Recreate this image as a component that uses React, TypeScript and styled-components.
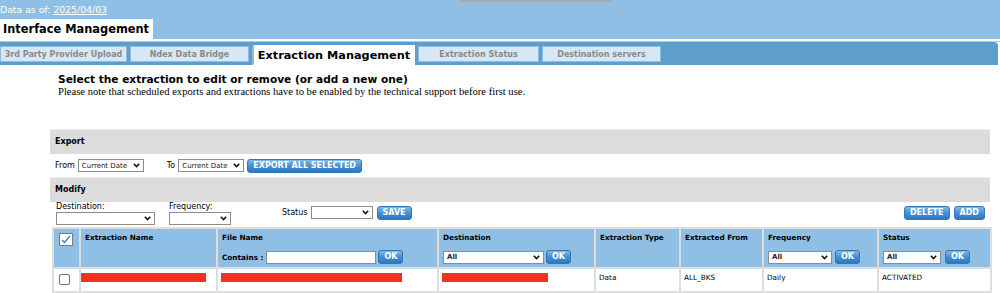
import styled, { createGlobalStyle } from "styled-components";

const GlobalStyle = createGlobalStyle`
  html, body {
    margin: 0;
    padding: 0;
    background: #fff;
  }
  body {
    font-family: "DejaVu Sans", Verdana, sans-serif;
    color: #000;
  }
`;

const Page = styled.div`
  width: 1000px;
  height: 293px;
  overflow: hidden;
`;

const TopBand = styled.header`
  position: relative;
  height: 39px;
  background: #8fbfe4;
  display: flex;
  flex-direction: column;
`;

const CutOffBar = styled.div`
  position: absolute;
  left: 459px;
  top: 0;
  width: 152px;
  height: 2px;
  background: #a8a8a8;
`;

const DataLine = styled.div`
  height: 19px;
  line-height: 19px;
  font-size: 9.3px;
  color: #fff;
  a {
    color: #fff;
    text-decoration: underline;
  }
`;

const TitleTab = styled.div`
  box-sizing: border-box;
  width: 153px;
  height: 20px;
  padding-left: 3px;
  background: #fff;
  font-size: 11.4px;
  font-weight: bold;
  line-height: 20px;
`;

const Divider = styled.div`
  height: 2px;
  background: #fff;
  border-bottom: 1px solid #a9cbe8;
`;

const TabBar = styled.nav`
  height: 23px;
  background: #5f9dcb;
  display: flex;
  align-items: flex-start;
  gap: 3px;
  padding-top: 4px;
  box-sizing: border-box;
  border-top-right-radius: 4px;
  margin-right: 2px;
`;

const Tab = styled.div<{ $w: number; $active?: boolean }>`
  box-sizing: border-box;
  width: ${(p) => p.$w}px;
  height: ${(p) => (p.$active ? 20 : 16)}px;
  margin-top: ${(p) => (p.$active ? -1 : 0)}px;
  display: flex;
  align-items: center;
  justify-content: center;
  background: ${(p) => (p.$active ? "#fff" : "#d6e7f5")};
  border: 1px solid ${(p) => (p.$active ? "#fff" : "#8dbde3")};
  border-left: ${(p) => (p.$active ? "2px solid #8dbde3" : "1px solid #8dbde3")};
  border-radius: ${(p) => (p.$active ? "3px 0 0 0" : "0")};
  color: ${(p) => (p.$active ? "#000" : "#8a8a8a")};
  font-size: ${(p) => (p.$active ? 11.3 : 8)}px;
  font-weight: bold;
  white-space: nowrap;
`;

const Content = styled.main`
  padding: 0 10px 0 50px;
`;

const Intro = styled.section`
  padding: 8px 0 0 8px;
`;

const Heading = styled.h1`
  margin: 0;
  font-size: 10.6px;
  line-height: 13px;
  font-weight: bold;
`;

const Note = styled.p`
  margin: 0;
  font-family: "Liberation Serif", "Times New Roman", serif;
  font-size: 10.6px;
  line-height: 12px;
`;

const SectionBar = styled.div<{ $h: number }>`
  height: ${(p) => p.$h}px;
  line-height: ${(p) => p.$h}px;
  background: #dcdcdc;
  border-top: 1px solid #ececec;
  padding-left: 5px;
  font-size: 8px;
  font-weight: bold;
`;

const FirstBar = styled(SectionBar)`
  margin-top: 31px;
`;

const ExportRow = styled.div`
  height: 23px;
  display: flex;
  align-items: center;
  padding-left: 5px;
  font-size: 8px;
`;

const Label = styled.span<{ $ml?: number }>`
  margin-left: ${(p) => p.$ml ?? 0}px;
  margin-right: 3px;
  font-size: 8px;
  white-space: nowrap;
`;

const SelectBox = styled.span<{ $w: number; $h?: number }>`
  box-sizing: border-box;
  display: inline-flex;
  align-items: center;
  justify-content: space-between;
  flex: none;
  width: ${(p) => p.$w}px;
  height: ${(p) => p.$h ?? 13}px;
  padding: 0 3px 0 3px;
  border: 1px solid #8c8c8c;
  background: #fff;
  font-size: 7px;
  color: #222;
  white-space: nowrap;
  svg {
    flex: none;
  }
`;

const BlueButton = styled.button<{ $ml?: number }>`
  flex: none;
  height: 14px;
  margin: 0 0 0 ${(p) => p.$ml ?? 3}px;
  padding: 0 5px;
  border: 1px solid #3577b6;
  border-radius: 3px;
  background: linear-gradient(#7fbbe8, #4490d3 50%, #2c78c0);
  color: #fff;
  font-family: "DejaVu Sans", Verdana, sans-serif;
  font-size: 8px;
  font-weight: bold;
  line-height: 12px;
  white-space: nowrap;
`;

const FilterRow = styled.div`
  height: 25px;
  display: flex;
  align-items: center;
  padding: 0 5px 0 6px;
`;

const FieldStack = styled.div<{ $mr: number }>`
  display: flex;
  flex-direction: column;
  align-self: flex-end;
  margin-right: ${(p) => p.$mr}px;
  padding-bottom: 2px;
  span:first-child {
    font-size: 8px;
    line-height: 10px;
  }
`;

const ButtonGroup = styled.div`
  display: flex;
  align-items: center;
  margin-top: -4px;
`;

const Spacer = styled.div`
  flex: 1;
`;

const Table = styled.table`
  margin-left: 2px;
  width: 938px;
  table-layout: fixed;
  border-collapse: collapse;
  font-size: 7.3px;
`;

const Th = styled.th`
  height: 40px;
  box-sizing: border-box;
  padding: 4px 4px 0 4px;
  background: #8fbfe4;
  border: 2px solid #dedede;
  vertical-align: top;
  text-align: left;
  font-weight: bold;
  white-space: nowrap;
`;

const HeadFilter = styled.div`
  display: flex;
  align-items: center;
  margin-top: 8px;
`;

const Td = styled.td`
  height: 24px;
  box-sizing: border-box;
  padding: 4px 3px 0;
  border: 2px solid #dedede;
  border-top: none;
  vertical-align: top;
  white-space: nowrap;
  overflow: visible;
`;

const Redacted = styled.span<{ $w: number; $ml: number }>`
  display: block;
  width: ${(p) => p.$w}px;
  height: 9px;
  margin: 0 0 0 ${(p) => p.$ml}px;
  background: #f5321f;
`;

const Box = styled.span`
  display: block;
  width: 11px;
  height: 11px;
  margin: 1px 0 0 2px;
  box-sizing: border-box;
  border: 1px solid #6f6f6f;
  border-radius: 2px;
  background: #fff;
`;

const Chevron = () => (
  <svg width="7" height="5" viewBox="0 0 7 5">
    <polyline points="0.8,0.8 3.5,3.6 6.2,0.8" fill="none" stroke="#111" strokeWidth="1.6" />
  </svg>
);

const Select = ({ w, h, value }: { w: number; h?: number; value?: string }) => (
  <SelectBox $w={w} $h={h}>
    <span>{value}</span>
    <Chevron />
  </SelectBox>
);

const CheckedBox = () => (
  <svg width="14" height="13" viewBox="0 0 14 13" style={{ display: "block", marginLeft: 1 }}>
    <rect x="0.5" y="0.5" width="13" height="12" fill="#fff" stroke="#7a7a7a" />
    <polyline points="3,7 5.5,9.5 11,3" fill="none" stroke="#2f7fd1" strokeWidth="1.3" />
  </svg>
);

const tabs = [
  { label: "3rd Party Provider Upload", w: 127 },
  { label: "Ndex Data Bridge", w: 119 },
  { label: "Extraction Management", w: 163, active: true },
  { label: "Extraction Status", w: 121 },
  { label: "Destination servers", w: 119 },
];

const colWidths = [27, 137, 221, 157, 85, 83, 115, 113];

export default function App() {
  return (
    <Page>
      <GlobalStyle />
      <TopBand>
        <CutOffBar />
        <DataLine>
          Data as of: <a href="#">2025/04/03</a>
        </DataLine>
        <TitleTab>Interface Management</TitleTab>
      </TopBand>
      <Divider />
      <TabBar>
        {tabs.map((t) => (
          <Tab key={t.label} $w={t.w} $active={t.active}>
            {t.label}
          </Tab>
        ))}
      </TabBar>

      <Content>
        <Intro>
          <Heading>Select the extraction to edit or remove (or add a new one)</Heading>
          <Note>
            Please note that scheduled exports and extractions have to be enabled by the
            technical support before first use.
          </Note>
        </Intro>

        <FirstBar $h={24}>Export</FirstBar>
        <ExportRow>
          <Label>From</Label>
          <Select w={66} value="Current Date" />
          <Label $ml={23}>To</Label>
          <Select w={66} value="Current Date" />
          <BlueButton $ml={3}>EXPORT ALL SELECTED</BlueButton>
        </ExportRow>

        <SectionBar $h={24}>Modify</SectionBar>
        <FilterRow>
          <FieldStack $mr={14}>
            <span>Destination:</span>
            <Select w={99} />
          </FieldStack>
          <FieldStack $mr={51}>
            <span>Frequency:</span>
            <Select w={62} />
          </FieldStack>
          <ButtonGroup>
            <Label>Status</Label>
            <Select w={62} />
            <BlueButton $ml={4}>SAVE</BlueButton>
          </ButtonGroup>
          <Spacer />
          <ButtonGroup>
            <BlueButton>DELETE</BlueButton>
            <BlueButton $ml={4}>ADD</BlueButton>
          </ButtonGroup>
        </FilterRow>

        <Table>
          <colgroup>
            {colWidths.map((w, i) => (
              <col key={i} style={{ width: w }} />
            ))}
          </colgroup>
          <thead>
            <tr>
              <Th>
                <CheckedBox />
              </Th>
              <Th>Extraction Name</Th>
              <Th>
                File Name
                <HeadFilter>
                  <span>Contains :</span>
                  <SelectBox $w={110} $h={13} style={{ marginLeft: 3 }} />
                  <BlueButton $ml={2}>OK</BlueButton>
                </HeadFilter>
              </Th>
              <Th>
                Destination
                <HeadFilter>
                  <Select w={101} value="All" />
                  <BlueButton $ml={2}>OK</BlueButton>
                </HeadFilter>
              </Th>
              <Th>Extraction Type</Th>
              <Th>Extracted From</Th>
              <Th>
                Frequency
                <HeadFilter>
                  <Select w={64} value="All" />
                  <BlueButton $ml={3}>OK</BlueButton>
                </HeadFilter>
              </Th>
              <Th>
                Status
                <HeadFilter>
                  <Select w={58} value="All" />
                  <BlueButton $ml={4}>OK</BlueButton>
                </HeadFilter>
              </Th>
            </tr>
          </thead>
          <tbody>
            <tr>
              <Td>
                <Box />
              </Td>
              <Td>
                <Redacted $w={126} $ml={-4} />
              </Td>
              <Td>
                <Redacted $w={181} $ml={0} />
              </Td>
              <Td>
                <Redacted $w={106} $ml={0} />
              </Td>
              <Td>Data</Td>
              <Td>ALL_BKS</Td>
              <Td>Daily</Td>
              <Td>ACTIVATED</Td>
            </tr>
          </tbody>
        </Table>
      </Content>
    </Page>
  );
}
